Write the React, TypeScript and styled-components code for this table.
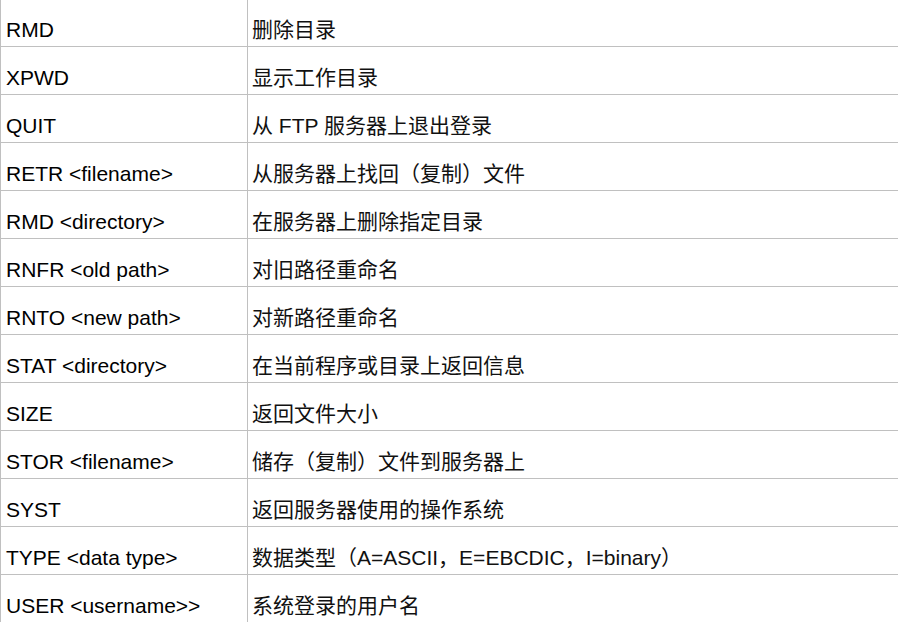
import React from "react";
import styled, { createGlobalStyle } from "styled-components";

const GlobalStyle = createGlobalStyle`
  html, body {
    margin: 0;
    padding: 0;
    background: #ffffff;
    overflow: hidden;
  }
  body {
    font-family: "Liberation Sans", Arial, "Noto Sans CJK SC", sans-serif;
  }
`;

const Table = styled.div`
  display: grid;
  grid-template-columns: 246px 1fr;
  width: 898px;
  margin-top: -1px;
  border-left: 1px solid #c0c0c0;
  box-sizing: border-box;
`;

const Cell = styled.div<{ $second?: boolean }>`
  box-sizing: border-box;
  height: 48px;
  padding: 20px 0 0 ${(p) => (p.$second ? "4px" : "5px")};
  border-bottom: 1px solid #c0c0c0;
  border-left: ${(p) => (p.$second ? "1px solid #c0c0c0" : "none")};
  font-family: "Liberation Sans", Arial, "Noto Sans CJK SC", sans-serif;
  font-size: 21px;
  line-height: 21px;
  color: ${(p) => (p.$second ? "#111111" : "#000000")};
  white-space: nowrap;
  overflow: hidden;
`;

const rows: [string, string][] = [
  ["RMD", "删除目录"],
  ["XPWD", "显示工作目录"],
  ["QUIT", "从 FTP 服务器上退出登录"],
  ["RETR <filename>", "从服务器上找回（复制）文件"],
  ["RMD <directory>", "在服务器上删除指定目录"],
  ["RNFR <old path>", "对旧路径重命名"],
  ["RNTO <new path>", "对新路径重命名"],
  ["STAT <directory>", "在当前程序或目录上返回信息"],
  ["SIZE", "返回文件大小"],
  ["STOR <filename>", "储存（复制）文件到服务器上"],
  ["SYST", "返回服务器使用的操作系统"],
  ["TYPE <data type>", "数据类型（A=ASCII，E=EBCDIC，I=binary）"],
  ["USER <username>>", "系统登录的用户名"],
];

export default function App() {
  return (
    <>
      <GlobalStyle />
      <Table>
        {rows.map(([cmd, desc]) => (
          <React.Fragment key={cmd}>
            <Cell>{cmd}</Cell>
            <Cell $second>{desc}</Cell>
          </React.Fragment>
        ))}
      </Table>
    </>
  );
}
